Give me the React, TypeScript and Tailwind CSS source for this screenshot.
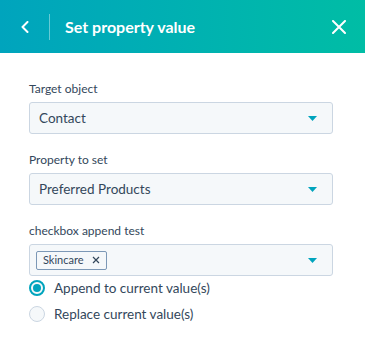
import React, { useState } from 'react';

const Caret = () => (
  <svg width="9" height="5" viewBox="0 0 9 5" className="shrink-0">
    <path d="M0 0 H9 L4.5 5 Z" fill="#00a4bd" />
  </svg>
);

const SelectField = ({ label, value }: { label: string; value: string }) => (
  <div className="flex flex-col">
    <label className="text-[12px] leading-[18px] text-[#33475b] mb-[4px]">{label}</label>
    <div className="h-[32px] flex items-center justify-between pl-[9px] pr-[15px] bg-[#f5f8fa] border border-[#cbd6e2] rounded-[3px]">
      <span className="text-[13.5px] text-[#33475b]">{value}</span>
      <Caret />
    </div>
  </div>
);

const Radio = ({ checked, label, onClick }: { checked: boolean; label: string; onClick: () => void }) => (
  <button onClick={onClick} className="flex items-center gap-[9px] h-[26px] text-left">
    <span
      className={
        checked
          ? 'w-[16px] h-[16px] rounded-full border-2 border-[#00a4bd] bg-[#f5f8fa] flex items-center justify-center'
          : 'w-[16px] h-[16px] rounded-full border border-[#cbd6e2] bg-[#f5f8fa]'
      }
    >
      {checked && <span className="w-[8px] h-[8px] rounded-full bg-[#00a4bd]" />}
    </span>
    <span className="text-[13.5px] text-[#33475b]">{label}</span>
  </button>
);

const App = () => {
  const [mode, setMode] = useState('append');

  return (
    <div className="w-[365px] h-[340px] bg-white" style={{ fontFamily: 'Lato, "Noto Sans", sans-serif' }}>
      {/* Header */}
      <div className="h-[53px] flex items-center bg-gradient-to-r from-[#00a4bd] to-[#00bda5] text-white">
        <button className="w-[49px] h-full flex items-center justify-center pl-[1px]">
          <svg width="8" height="12" viewBox="0 0 8 12">
            <path d="M6.5 1 L1.5 6 L6.5 11" stroke="white" strokeWidth="2" fill="none" strokeLinecap="round" strokeLinejoin="round" />
          </svg>
        </button>
        <div className="w-px h-[26px] bg-white/40" />
        <h1 className="ml-[15px] flex-1 text-[16px] font-bold">Set property value</h1>
        <button className="mr-[19px] w-[14px] h-[14px] flex items-center justify-center">
          <svg width="14" height="14" viewBox="0 0 14 14">
            <path d="M1 1 L13 13 M13 1 L1 13" stroke="white" strokeWidth="2" strokeLinecap="round" />
          </svg>
        </button>
      </div>

      {/* Body */}
      <div className="px-[29px] pt-[27px] pr-[32px] flex flex-col gap-[17px]">
        <SelectField label="Target object" value="Contact" />
        <SelectField label="Property to set" value="Preferred Products" />
        <div className="flex flex-col">
          <label className="text-[12px] leading-[18px] text-[#33475b] mb-[4px]">checkbox append test</label>
          <div className="h-[32px] flex items-center justify-between pl-[6px] pr-[15px] bg-[#f5f8fa] border border-[#cbd6e2] rounded-[3px]">
            <span className="h-[19px] flex items-center gap-[8px] px-[6px] bg-[#f5f8fa] border border-[#7c98b6] rounded-[2px] text-[11px] text-[#33475b]">
              Skincare
              <svg width="8" height="8" viewBox="0 0 8 8">
                <path d="M1 1 L7 7 M7 1 L1 7" stroke="#33475b" strokeWidth="1.2" />
              </svg>
            </span>
            <Caret />
          </div>
          <div className="flex flex-col mt-[-1px]">
            <Radio checked={mode === 'append'} label="Append to current value(s)" onClick={() => setMode('append')} />
            <Radio checked={mode === 'replace'} label="Replace current value(s)" onClick={() => setMode('replace')} />
          </div>
        </div>
      </div>
    </div>
  );
};

export default App;
